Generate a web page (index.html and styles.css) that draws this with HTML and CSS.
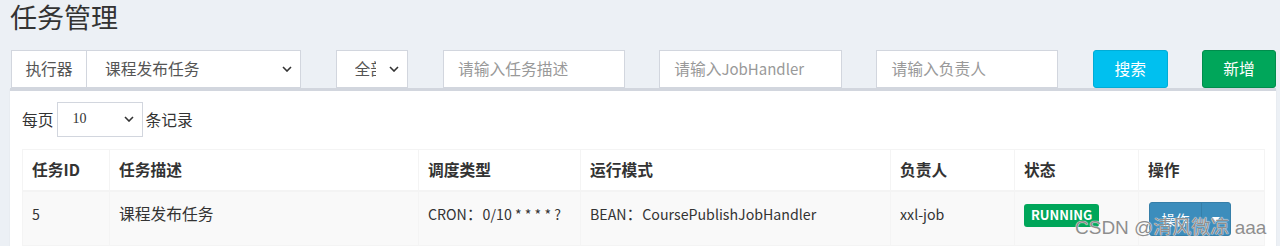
FILE: index.html
```html
<!DOCTYPE html>
<html lang="zh-CN">
<head>
    <meta charset="UTF-8">
    <title>任务管理</title>
    <link rel="stylesheet" href="styles.css">
</head>
<body>
    <div class="content">
        <h1 class="page-title">任务管理</h1>

        <div class="filter-row">
            <div class="input-group">
                <span class="addon">执行器</span>
                <div class="select select-wide">
                    <span class="select-text">课程发布任务</span>
                    <svg class="chevron" width="10" height="6" viewBox="0 0 10 6"><path d="M1 1l4 4 4-4" fill="none" stroke="#333" stroke-width="1.6"/></svg>
                </div>
            </div>
            <div class="select select-status">
                <span class="select-text clip">全部</span>
                <svg class="chevron" width="10" height="6" viewBox="0 0 10 6"><path d="M1 1l4 4 4-4" fill="none" stroke="#333" stroke-width="1.6"/></svg>
            </div>
            <div class="input">请输入任务描述</div>
            <div class="input input-mid">请输入<span class="latin">JobHandler</span></div>
            <div class="input">请输入负责人</div>
            <button class="btn btn-info">搜索</button>
            <button class="btn btn-success">新增</button>
        </div>

        <div class="box">
            <div class="length-row">
                <span>每页</span>
                <div class="select select-length">
                    <span class="length-value">10</span>
                    <svg class="chevron" width="10" height="6" viewBox="0 0 10 6"><path d="M1 1l4 4 4-4" fill="none" stroke="#333" stroke-width="1.6"/></svg>
                </div>
                <span>条记录</span>
            </div>

            <table class="job-table">
                <colgroup>
                    <col style="width: 87px">
                    <col style="width: 309px">
                    <col style="width: 162px">
                    <col style="width: 310px">
                    <col style="width: 124px">
                    <col style="width: 124px">
                    <col style="width: 126px">
                </colgroup>
                <thead>
                    <tr>
                        <th>任务ID</th>
                        <th>任务描述</th>
                        <th>调度类型</th>
                        <th>运行模式</th>
                        <th>负责人</th>
                        <th>状态</th>
                        <th>操作</th>
                    </tr>
                </thead>
                <tbody>
                    <tr>
                        <td><span class="latin">5</span></td>
                        <td>课程发布任务</td>
                        <td><span class="latin">CRON</span>：<span class="latin">0/10 * * * * ?</span></td>
                        <td><span class="latin">BEAN</span>：<span class="latin">CoursePublishJobHandler</span></td>
                        <td><span class="latin">xxl-job</span></td>
                        <td><span class="label-running">RUNNING</span></td>
                        <td>
                            <div class="btn-split">
                                <span class="btn-split-main">操作</span>
                                <span class="btn-split-caret">
                                    <svg width="8" height="5" viewBox="0 0 8 5"><path d="M0 0h8L4 5z" fill="#fff"/></svg>
                                </span>
                            </div>
                        </td>
                    </tr>
                </tbody>
            </table>
        </div>
    </div>

    <div class="watermark">CSDN @清风微凉 aaa</div>
</body>
</html>
```

FILE: styles.css
```css
body {
    margin: 0;
    background-color: #ecf0f5;
    font-family: "Noto Sans CJK SC", "Noto Sans", sans-serif;
    color: #333;
    font-size: 15.75px;
    overflow: hidden;
}
.content {
    padding: 2px 4px 0 10px;
}
.page-title {
    margin: 0 0 18px 0;
    font-size: 27px;
    font-weight: 400;
    line-height: 1.1;
    color: #333;
}
.latin {
    font-size: 14.2px;
}
.filter-row {
    display: flex;
    gap: 34.5px;
    padding-left: 1px;
    height: 38px;
}
.input-group {
    display: flex;
    width: 290px;
}
.addon {
    width: 75px;
    box-sizing: border-box;
    border: 1px solid #d2d6de;
    border-right: none;
    background: #fff;
    color: #555;
    display: flex;
    align-items: center;
    justify-content: center;
}
.select {
    box-sizing: border-box;
    border: 1px solid #d2d6de;
    background: #fff;
    display: flex;
    align-items: center;
    justify-content: space-between;
    color: #555;
}
.select-wide {
    width: 215px;
    padding: 0 8px 0 18px;
}
.select-status {
    width: 73px;
    padding: 0 8px 0 18px;
}
.clip {
    display: block;
    width: 21px;
    overflow: hidden;
    white-space: nowrap;
}
.chevron {
    flex-shrink: 0;
}
.input {
    width: 182px;
    box-sizing: border-box;
    border: 1px solid #d2d6de;
    background: #fff;
    color: #999;
    padding: 0 14px;
    display: flex;
    align-items: center;
}
.input .latin {
    font-size: 15px;
}
.input-mid {
    width: 183px;
}
.btn {
    box-sizing: border-box;
    height: 38px;
    border-radius: 3px;
    color: #fff;
    font-family: inherit;
    font-size: 15.75px;
    padding: 0;
}
.btn-info {
    width: 75px;
    background-color: #00c0ef;
    border: 1px solid #00acd6;
}
.btn-success {
    width: 74px;
    background-color: #00a65a;
    border: 1px solid #008d4c;
}
.box {
    margin-top: 0;
    background: #fff;
    border-top: 3px solid #d2d6de;
    box-shadow: 0 1px 1px rgba(0, 0, 0, 0.1);
    padding: 11px 12px 12px 12px;
    width: 1242px;
}
.length-row {
    display: flex;
    align-items: center;
    gap: 3px;
    height: 35px;
    margin-bottom: 12px;
}
.select-length {
    width: 86px;
    height: 35px;
    padding: 0 8px 0 15px;
    color: #333;
}
.length-value {
    font-family: "Liberation Serif", serif;
    font-size: 14px;
}
.job-table {
    width: 1242px;
    table-layout: fixed;
    border-collapse: collapse;
    border: 1px solid #f4f4f4;
}
.job-table th,
.job-table td {
    border: 1px solid #f4f4f4;
    padding: 9px;
    line-height: 22.5px;
    text-align: left;
    vertical-align: top;
    white-space: nowrap;
}
.job-table th {
    font-weight: 700;
    border-bottom-width: 2px;
}
.job-table td {
    padding-top: 11px;
}
.job-table tbody tr {
    background-color: #f9f9f9;
}
.label-running {
    display: inline-block;
    background-color: #00a65a;
    color: #fff;
    font-weight: 700;
    font-size: 13px;
    line-height: 18px;
    padding: 2px 7px 3px 7px;
    border-radius: 3px;
    vertical-align: top;
    margin-top: 1px;
}
.btn-split {
    display: inline-flex;
    height: 34px;
    margin-left: 1px;
    margin-top: -1px;
    border-radius: 3px;
    overflow: hidden;
    background-color: #3c8dbc;
    border: 1px solid #367fa9;
    box-sizing: border-box;
    color: #fff;
}
.btn-split-main {
    width: 51px;
    display: flex;
    align-items: center;
    justify-content: center;
    font-size: 14px;
    border-right: 1px solid #367fa9;
}
.btn-split-caret {
    width: 28px;
    display: flex;
    align-items: center;
    justify-content: center;
}
.watermark {
    position: absolute;
    left: 1075px;
    top: 212px;
    font-family: "Liberation Sans", "Noto Sans CJK SC", sans-serif;
    font-size: 19px;
    color: #8e8e8e;
    text-shadow: 0 0 1px #fff, 0 0 1px #fff;
    white-space: nowrap;
}
```
